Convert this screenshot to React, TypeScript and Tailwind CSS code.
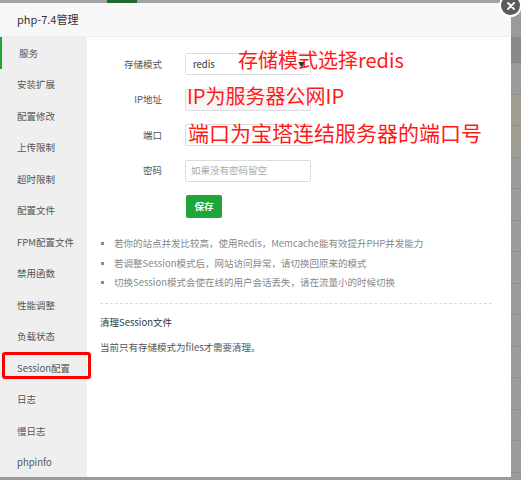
import React from 'react';

const menu = [
  '服务',
  '安装扩展',
  '配置修改',
  '上传限制',
  '超时限制',
  '配置文件',
  'FPM配置文件',
  '禁用函数',
  '性能调整',
  '负载状态',
  'Session配置',
  '日志',
  '慢日志',
  'phpinfo',
];

const tips = [
  '若你的站点并发比较高，使用Redis，Memcache能有效提升PHP并发能力',
  '若调整Session模式后，网站访问异常，请切换回原来的模式',
  '切换Session模式会使在线的用户会话丢失，请在流量小的时候切换',
];

const font = "font-['Noto_Sans_CJK_SC','Noto_Sans',sans-serif]";

export default function App() {
  return (
    <div className={`relative w-[521px] h-[480px] overflow-hidden bg-[#9a9a9a] ${font}`}>
      {/* page behind the dialog */}
      <div className="flex h-[3px]">
        <div className="w-[107px] bg-[#a3a3a3]" />
        <div className="w-[30px] bg-[#226b2f]" />
        <div className="flex-1 bg-[#a3a3a3]" />
      </div>
      <div className="absolute left-[511px] top-[37px] w-[10px] flex flex-col">
        <div className="h-[26px] bg-[#8a8a8a] border-b border-[#808080]" />
        {Array.from({ length: 13 }).map((_, i) => (
          <div
            key={i}
            className={`h-[31.5px] border-b border-[#8e8e8e] ${i === 1 || i === 2 ? 'bg-[#a19f94]' : 'bg-[#9c9c9c]'}`}
          />
        ))}
      </div>

      {/* dialog */}
      <div className="absolute left-0 top-[3px] w-[511px] h-[474px] bg-white flex flex-col">
        <div className="h-[34px] shrink-0 bg-[#f8f8f8] border-b border-[#eeeeee] flex items-center pl-[17px] text-[11px] text-[#333]">
          php-7.4管理
        </div>
        <div className="flex flex-1 min-h-0">
          <div className="w-[87px] shrink-0 bg-[#efefef] flex flex-col">
            {menu.map((m, i) => (
              <div
                key={m}
                className={`h-[31.5px] shrink-0 flex items-center pl-[17px] text-[9.5px] text-[#555] ${
                  i === 0 ? 'border-l-2 border-[#20a53a] pl-[15px] bg-[#efefef]' : ''
                }`}
              >
                {m}
              </div>
            ))}
          </div>

          <div className="relative flex-1 px-[13px] pt-[16px]">
            <div className="flex flex-col gap-[13.5px]">
              <div className="flex items-center">
                <div className="w-[62px] text-right text-[9.5px] text-[#555]">存储模式</div>
                <div className="ml-[23px] w-[126px] h-[22px] border border-[#dcdcdc] rounded-[2px] flex items-center justify-between pl-[7px] pr-[5px] text-[9.5px] text-[#333]">
                  <span>redis</span>
                  <span className="text-[7px] text-[#333]">▼</span>
                </div>
              </div>
              <div className="flex items-center">
                <div className="w-[62px] text-right text-[9.5px] text-[#555]">IP地址</div>
                <div className="ml-[23px] w-[126px] h-[22px] border border-[#dcdcdc] rounded-[2px] bg-[#f7f7f7]" />
              </div>
              <div className="flex items-center">
                <div className="w-[62px] text-right text-[9.5px] text-[#555]">端口</div>
                <div className="ml-[23px] w-[126px] h-[22px] border border-[#dcdcdc] rounded-[2px]" />
              </div>
              <div className="flex items-center">
                <div className="w-[62px] text-right text-[9.5px] text-[#555]">密码</div>
                <div className="ml-[23px] w-[126px] h-[22px] border border-[#dcdcdc] rounded-[2px] flex items-center pl-[5px] text-[9.5px] text-[#aaa]">
                  如果没有密码留空
                </div>
              </div>
              <div className="flex">
                <button className="ml-[86px] w-[36px] h-[23px] rounded-[2px] bg-[#20a53a] text-white text-[9.5px] font-bold">
                  保存
                </button>
              </div>
            </div>

            <ul className="mt-[16px] flex flex-col text-[9.5px] text-[#888]">
              {tips.map((t) => (
                <li key={t} className="h-[19.5px] flex items-center leading-none">
                  <span className="w-[3px] h-[3px] bg-[#888] ml-[1px] mr-[10px]" />
                  {t}
                </li>
              ))}
            </ul>

            <div className="mt-[10px] w-[392px] border-t border-dashed border-[#dddddd]" />
            <div className="mt-[11px] leading-[14px] text-[9.5px] text-[#333]">清理Session文件</div>
            <div className="mt-[11px] leading-[14px] text-[9.5px] text-[#555]">当前只有存储模式为files才需要清理。</div>

            {/* annotations */}
            <div className="absolute left-[151px] top-[10px] text-[20px] leading-[26px] text-[#ff1a1a]">存储模式选择redis</div>
            <div className="absolute left-[100px] top-[46px] text-[20px] leading-[26px] text-[#ff1a1a]">IP为服务器公网IP</div>
            <div className="absolute left-[101px] top-[81px] text-[21px] leading-[28px] text-[#ff1a1a]">端口为宝塔连结服务器的端口号</div>
          </div>
        </div>

        <div className="absolute left-[2px] top-[349px] w-[89px] h-[27px] border-[3px] border-[#ff0000] rounded-[3px]" />
      </div>

      <div className="absolute left-[499px] top-[-6px] w-[23px] h-[23px] rounded-full bg-[#5b5b5b] border-2 border-white flex items-center justify-center">
        <svg width="10" height="10" viewBox="0 0 10 10">
          <path d="M2 2L8 8M8 2L2 8" stroke="white" strokeWidth="1.8" strokeLinecap="round" />
        </svg>
      </div>
    </div>
  );
}
